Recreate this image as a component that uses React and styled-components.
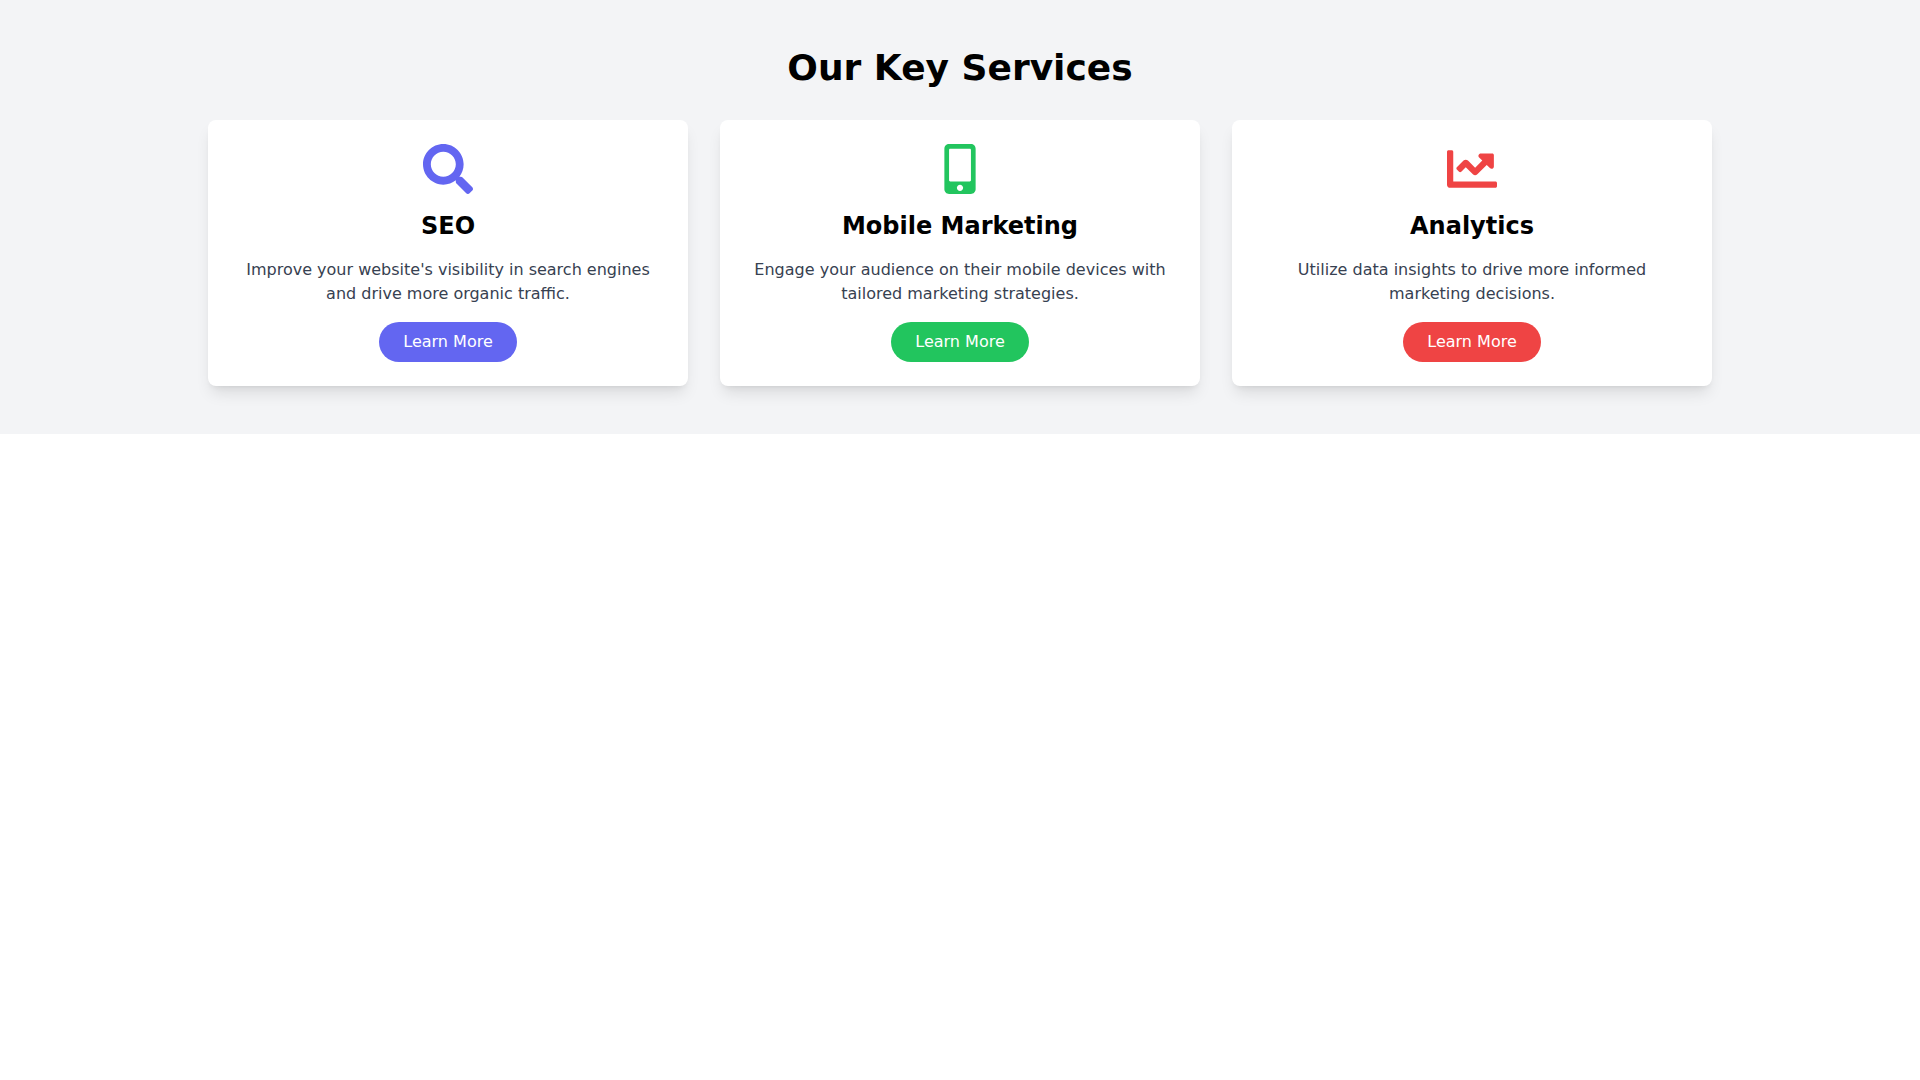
import React from 'react';
import styled, { createGlobalStyle } from 'styled-components';
import { FaSearch, FaMobileAlt, FaChartLine } from 'react-icons/fa';

const GlobalStyle = createGlobalStyle`
    *, *::before, *::after {
        box-sizing: border-box;
    }
    body {
        margin: 0;
        background: #fff;
        color: #000;
        font-family: "DejaVu Sans", sans-serif;
        font-size: 16px;
        line-height: 24px;
    }
`

const Section = styled.section`
    background: #f3f4f6;
    padding: 48px 0;
`

const Container = styled.div`
    max-width: 1536px;
    margin: 0 auto;
    padding: 0 16px;
`

const Heading = styled.h2`
    margin: 0 0 32px;
    font-size: 36px;
    font-weight: 700;
    line-height: 40px;
    text-align: center;
`

const CardGrid = styled.div`
    display: grid;
    grid-template-columns: 1fr;
    gap: 32px;
    @media (min-width: 768px) {
        grid-template-columns: repeat(3, 1fr);
    }
`

const Card = styled.article`
    display: flex;
    flex-direction: column;
    align-items: center;
    padding: 24px;
    background: #fff;
    border-radius: 8px;
    box-shadow: 0 10px 15px -3px rgba(0, 0, 0, 0.1), 0 4px 6px -4px rgba(0, 0, 0, 0.1);
    text-align: center;
`

const CardIcon = styled.div`
    display: flex;
    margin-bottom: 16px;
    color: ${props => props.$color};
`

const CardTitle = styled.h3`
    margin: 0 0 16px;
    font-size: 24px;
    font-weight: 700;
    line-height: 32px;
`

const CardText = styled.p`
    margin: 0 0 16px;
    color: #374151;
`

const LearnButton = styled.button`
    padding: 8px 24px;
    border: none;
    border-radius: 9999px;
    background: ${props => props.$color};
    color: #fff;
    font: inherit;
    cursor: pointer;
`

const services = [
    {
        title: 'SEO',
        text: "Improve your website's visibility in search engines and drive more organic traffic.",
        color: '#6366f1',
        Icon: FaSearch
    },
    {
        title: 'Mobile Marketing',
        text: 'Engage your audience on their mobile devices with tailored marketing strategies.',
        color: '#22c55e',
        Icon: FaMobileAlt
    },
    {
        title: 'Analytics',
        text: 'Utilize data insights to drive more informed marketing decisions.',
        color: '#ef4444',
        Icon: FaChartLine
    }
];

export default function App() {
    return (
        <>
            <GlobalStyle />
            <Section>
                <Container>
                    <Heading>Our Key Services</Heading>
                    <CardGrid>
                        {services.map(({ title, text, color, Icon }) => (
                            <Card key={title}>
                                <CardIcon $color={color}><Icon size={50} /></CardIcon>
                                <CardTitle>{title}</CardTitle>
                                <CardText>{text}</CardText>
                                <LearnButton type="button" $color={color}>Learn More</LearnButton>
                            </Card>
                        ))}
                    </CardGrid>
                </Container>
            </Section>
        </>
    );
}
